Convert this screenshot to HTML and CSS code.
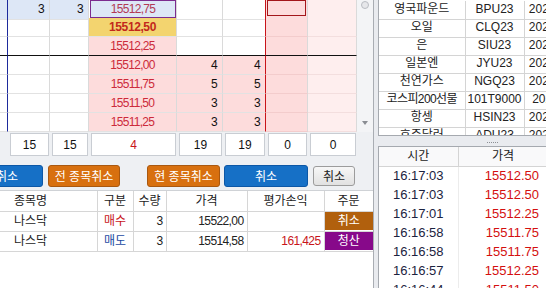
FILE: index.html
```html
<!DOCTYPE html>
<html lang="ko">

<head>
  <meta charset="UTF-8" />
  <meta name="viewport" content="width=device-width, initial-scale=1.0" />
  <title>호가</title>
  <link rel="stylesheet" href="styles.css">
</head>

<body>
  <div class="app">
    <div class="left">
      <div class="book">
        <div class="book-grid">
          <div class="row">
            <div class="hl"></div>
            <div class="hl">3</div>
            <div class="hl">3</div>
            <div class="price"><span class="p-box">15512,75</span></div>
            <div></div>
            <div></div>
            <div><span class="r-box"></span></div>
            <div></div>
          </div>
          <div class="row">
            <div></div>
            <div></div>
            <div></div>
            <div class="price cur">15512,50</div>
            <div></div>
            <div></div>
            <div></div>
            <div></div>
          </div>
          <div class="row mid">
            <div></div>
            <div></div>
            <div></div>
            <div class="price pk">15512,25</div>
            <div></div>
            <div></div>
            <div></div>
            <div></div>
          </div>
          <div class="row">
            <div></div>
            <div></div>
            <div></div>
            <div class="price pk">15512,00</div>
            <div class="pk">4</div>
            <div class="pk">4</div>
            <div></div>
            <div></div>
          </div>
          <div class="row">
            <div></div>
            <div></div>
            <div></div>
            <div class="price pk">15511,75</div>
            <div class="pk">5</div>
            <div class="pk">5</div>
            <div></div>
            <div></div>
          </div>
          <div class="row">
            <div></div>
            <div></div>
            <div></div>
            <div class="price pk">15511,50</div>
            <div class="pk">3</div>
            <div class="pk">3</div>
            <div></div>
            <div></div>
          </div>
          <div class="row">
            <div></div>
            <div></div>
            <div></div>
            <div class="price pk">15511,25</div>
            <div class="pk">3</div>
            <div class="pk">3</div>
            <div></div>
            <div></div>
          </div>
        </div>
        <div class="vscroll">
          <span class="thumb"></span>
          <span class="arrow"></span>
        </div>
      </div>

      <div class="totals">
        <i></i>
        <span>15</span>
        <span>15</span>
        <span class="red">4</span>
        <span>19</span>
        <span>19</span>
        <span>0</span>
        <span>0</span>
      </div>

      <div class="actions">
        <button class="btn blue w72">취소</button>
        <button class="btn orange w72 ml5">전 종목취소</button>
        <button class="btn orange w73 ml27">현 종목취소</button>
        <button class="btn blue w84 ml4">취소</button>
        <button class="btn gray w42 ml5">취소</button>
      </div>

      <div class="orders">
        <table>
          <colgroup>
            <col style="width:97px">
            <col style="width:36px">
            <col style="width:33px">
            <col style="width:81px">
            <col style="width:77px">
            <col style="width:49px">
          </colgroup>
          <tr>
            <th class="name">종목명</th>
            <th>구분</th>
            <th>수량</th>
            <th>가격</th>
            <th>평가손익</th>
            <th>주문</th>
          </tr>
          <tr>
            <td class="name">나스닥</td>
            <td class="buy">매수</td>
            <td class="num">3</td>
            <td class="num">15522,00</td>
            <td class="num"></td>
            <td class="act"><div class="cancel">취소</div></td>
          </tr>
          <tr>
            <td class="name">나스닥</td>
            <td class="sell">매도</td>
            <td class="num">3</td>
            <td class="num">15514,58</td>
            <td class="num red">161,425</td>
            <td class="act"><div class="close">청산</div></td>
          </tr>
        </table>
      </div>
    </div>

    <div class="right">
      <div class="quotes">
        <table>
          <colgroup>
            <col style="width:86px">
            <col style="width:59px">
            <col style="width:63px">
          </colgroup>
          <tr><td>영국파운드</td><td>BPU23</td><td>20230918</td></tr>
          <tr><td>오일</td><td>CLQ23</td><td>20230720</td></tr>
          <tr><td>은</td><td>SIU23</td><td>20230927</td></tr>
          <tr><td>일본엔</td><td>JYU23</td><td>20230918</td></tr>
          <tr><td>천연가스</td><td>NGQ23</td><td>20230727</td></tr>
          <tr><td class="tight">코스피200선물</td><td>101T9000</td><td>2023914</td></tr>
          <tr><td>항셍</td><td>HSIN23</td><td>20230728</td></tr>
          <tr><td>호주달러</td><td>ADU23</td><td>20230918</td></tr>
        </table>
      </div>
      <div class="splitter"><span class="grip"></span></div>
      <div class="ticks">
        <table>
          <colgroup>
            <col style="width:79px">
            <col style="width:90px">
          </colgroup>
          <tr><th>시간</th><th>가격</th></tr>
          <tr><td class="time">16:17:03</td><td class="tp">15512.50</td></tr>
          <tr><td class="time">16:17:03</td><td class="tp">15512.50</td></tr>
          <tr><td class="time">16:17:01</td><td class="tp">15512.25</td></tr>
          <tr><td class="time">16:16:58</td><td class="tp">15511.75</td></tr>
          <tr><td class="time">16:16:58</td><td class="tp">15511.75</td></tr>
          <tr><td class="time">16:16:57</td><td class="tp">15512.25</td></tr>
          <tr><td class="time">16:16:44</td><td class="tp">15511.50</td></tr>
        </table>
      </div>
    </div>
  </div>
</body>

</html>
```

FILE: styles.css
```css
* {
  margin: 0;
  padding: 0;
  box-sizing: border-box;
}

body {
  width: 546px;
  height: 288px;
  overflow: hidden;
  background: #e9ebef;
  font-family: "Liberation Sans", "Noto Sans CJK KR", sans-serif;
  font-size: 12px;
  line-height: 16px;
  color: #222;
}

.app {
  display: flex;
  height: 288px;
}

/* 왼쪽 : 호가창 */
.left {
  width: 374px;
  flex: none;
  display: flex;
  flex-direction: column;
  overflow: hidden;
  background: #eef0f3;
  border-right: 1px solid #a9adb3;
}

.book {
  display: flex;
  height: 132px;
  flex: none;
  overflow: hidden;
  background: #fff;
}

.book-grid {
  width: 357px;
  margin-top: -1px;
}

.row {
  display: grid;
  grid-template-columns: 8px 42px 39px 88px 46px 43px 42px 49px;
  height: 19px;
}

.row > div {
  display: flex;
  align-items: center;
  justify-content: flex-end;
  padding-right: 5px;
  border-right: 1px solid #dadada;
  border-bottom: 1px solid #e2e2e2;
  letter-spacing: -0.7px;
  color: #111;
}

.row > div:nth-child(1) {
  border-right-color: #1d2a9c;
}

.row > div:nth-child(6) {
  border-right-color: #c8141a;
}

.row > div:nth-child(7) {
  background: #fddcdc;
  border-bottom-color: #f3cccc;
  padding: 1px 1px 1px 1px;
  align-items: stretch;
}

.row > div:nth-child(8) {
  background: #feeeee;
  border-bottom-color: #f3dede;
}

.row.mid > div {
  border-bottom-color: #111;
}

.hl {
  background: #dde7f6;
}

.pk {
  background: #fddcdc;
}

.row > .price {
  justify-content: center;
  padding: 0;
  color: #cc2a3a;
}

.row > .cur {
  background: #f3d46f;
  color: #c2281c;
  font-weight: bold;
  letter-spacing: -0.4px;
}

.p-box {
  flex: 1;
  align-self: stretch;
  margin: 1px 0 1px 1px;
  border: 1px solid #7c2c8e;
  background: #dde7f6;
  display: flex;
  align-items: center;
  justify-content: center;
  color: #b23a55;
}

.r-box {
  flex: 1;
  border: 1px solid #a3161a;
  margin-bottom: 2px;
}

.vscroll {
  width: 16px;
  display: flex;
  flex-direction: column;
  justify-content: space-between;
  align-items: center;
  padding: 1px 0 7px;
  background: #f3f4f6;
}

.thumb {
  width: 8px;
  height: 8px;
  border-radius: 50%;
  border: 1px solid #b9bcc2;
  background: #e6e7ea;
}

.arrow {
  width: 0;
  height: 0;
  border-left: 3px solid transparent;
  border-right: 3px solid transparent;
  border-top: 4px solid #8a8d93;
}

/* 합계 */
.totals {
  display: grid;
  grid-template-columns: 8px 42px 39px 88px 46px 43px 42px 49px;
  height: 24px;
  padding-top: 1px;
  flex: none;
}

.totals span {
  margin: 0 1px 0 2px;
  display: flex;
  align-items: center;
  justify-content: center;
  background: #fff;
  border: 1px solid #c9cdd3;
  color: #111;
}

.red {
  color: #c8141a !important;
}

/* 버튼 */
.actions {
  display: flex;
  align-items: center;
  height: 22px;
  margin: 9px 0 0 -29px;
  flex: none;
}

.btn {
  height: 22px;
  border-radius: 3px;
  font-family: "Noto Sans CJK KR", sans-serif;
  font-size: 12px;
  line-height: 18px;
  color: #fff;
  flex: none;
}

.blue {
  background: #1670c6;
  border: 1px solid #0c57a6;
}

.orange {
  background: #d8700f;
  border: 1px solid #a95810;
}

.gray {
  height: 20px;
  background: linear-gradient(#f7f7f7, #e1e1e1);
  border: 1px solid #9c9c9c;
  color: #222;
}

.w42 { width: 42px; }
.w72 { width: 72px; }
.w73 { width: 73px; }
.w84 { width: 84px; }
.ml4 { margin-left: 4px; }
.ml5 { margin-left: 5px; }
.ml27 { margin-left: 27px; }

/* 주문 목록 */
.orders {
  flex: 1;
  margin-top: 3px;
  background: #fff;
  border-top: 1px solid #cfd2d6;
}

table {
  border-collapse: collapse;
  table-layout: fixed;
}

.orders table {
  width: 373px;
}

.orders th,
.orders td {
  height: 20px;
  padding: 0 3px;
  border-right: 1px solid #d6d6d6;
  border-bottom: 1px solid #d6d6d6;
  font-weight: normal;
  text-align: center;
  color: #222;
}

.orders .name {
  text-align: left;
  padding-left: 14px;
}

.orders .num {
  text-align: right;
  letter-spacing: -0.6px;
}

.buy {
  color: #c8141a !important;
}

.sell {
  color: #1c4aa2 !important;
}

.orders .act {
  padding: 0;
  border-right: none;
}

.cancel,
.close {
  height: 18px;
  line-height: 18px;
  color: #fff;
  text-align: center;
}

.cancel {
  background: #b1600d;
}

.close {
  background: #87098a;
}

/* 오른쪽 */
.right {
  flex: 1;
  margin-left: 4px;
  display: flex;
  flex-direction: column;
  min-width: 0;
  overflow: hidden;
}

.quotes {
  height: 136px;
  flex: none;
  overflow: hidden;
  padding-top: 1px;
  background: #fff;
  border-left: 1px solid #a5a9af;
  border-bottom: 1px solid #a5a9af;
}

.quotes table {
  width: 208px;
}

.quotes td {
  height: 18px;
  line-height: 14px;
  padding-bottom: 2px;
  text-align: center;
  border-right: 1px solid #d4d4d4;
  border-bottom: 1px solid #d4d4d4;
  white-space: nowrap;
  overflow: hidden;
  color: #222;
}

.quotes .tight {
  letter-spacing: -0.6px;
}

.splitter {
  height: 10px;
  flex: none;
  display: flex;
  align-items: flex-end;
  padding: 0 0 3px 109px;
}

.grip {
  width: 11px;
  border-top: 1px dotted #8c8f94;
}

.ticks {
  flex: 1;
  overflow: hidden;
  background: #fff;
  border-left: 1px solid #a5a9af;
  border-top: 1px solid #a5a9af;
}

.ticks table {
  width: 169px;
}

.ticks th {
  height: 19px;
  font-weight: normal;
  font-size: 12px;
  background: #f9f9fa;
  border-right: 1px solid #d4d4d4;
  border-bottom: 1px solid #d4d4d4;
  color: #222;
}

.ticks td {
  height: 19px;
  font-size: 13px;
}

.time {
  text-align: center;
  color: #1c2340;
  border-right: 1px solid #ececec;
}

.tp {
  text-align: right;
  padding-right: 9px;
  color: #d40f0f;
}
```
